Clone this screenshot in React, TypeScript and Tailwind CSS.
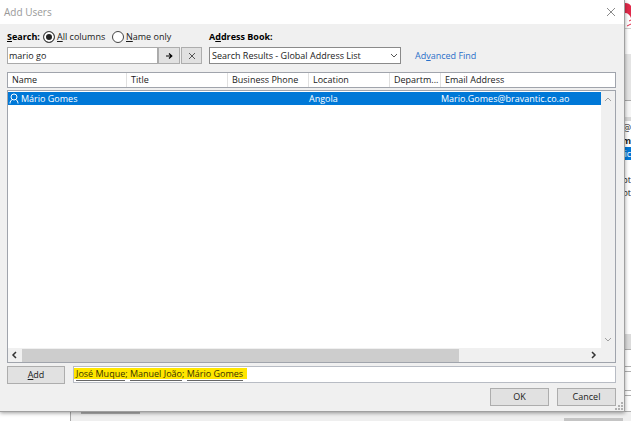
import React, { useState } from "react";

const columns = [
  { label: "Name", cell: "Mário Gomes" },
  { label: "Title", cell: "" },
  { label: "Business Phone", cell: "" },
  { label: "Location", cell: "Angola" },
  { label: "Departm...", cell: "" },
  { label: "Email Address", cell: "Mario.Gomes@bravantic.co.ao" },
];

const recipients = ["José Muque", "Manuel João", "Mário Gomes"];

function Chevron({ d, className }: { d: string; className: string }) {
  return (
    <svg viewBox="0 0 8 8" className={`w-2 h-2 fill-none ${className}`}>
      <path d={d} />
    </svg>
  );
}

function Columns() {
  return (
    <colgroup>
      <col className="w-[119px]" />
      <col className="w-[101px]" />
      <col className="w-[81px]" />
      <col className="w-[81px]" />
      <col className="w-[51px]" />
      <col />
    </colgroup>
  );
}

// Only its right edge shows, the dialog lies over the rest
function BackgroundWindow() {
  return (
    <div className="w-[6px] shrink-0 bg-white flex flex-col leading-[13px] whitespace-nowrap">
      <svg viewBox="0 0 6 28" className="w-[6px] h-[28px] shrink-0">
        <path d="M0 3C3 3 5 4 6 6V18C5 15 3 13 0 13Z" fill="#e0294a" />
        <path d="M2 26L6 24M4 21L6 20" stroke="#e0294a" fill="none" />
      </svg>
      <div className="h-[26px] shrink-0 border-t border-[#d0d0d0]" />
      <div className="h-[47px] shrink-0 bg-[#e4e4e4] border-b border-[#a8a8a8]" />
      <div className="h-[16px] shrink-0 bg-[#f6f6f6]" />
      <div className="h-[4px] shrink-0 bg-[#d8d8d8]" />
      <div className="flex justify-end">@</div>
      <div className="flex justify-end font-bold">m</div>
      <div className="flex justify-end bg-[#0078d7] text-white">ic</div>
      <div className="mt-[13px] flex justify-end">pt</div>
      <div className="flex justify-end">ot</div>
      <div className="flex-1" />
      <div className="h-[15px] bg-[#dcdcdc]" />
      <div className="h-[18px] border-y border-[#b0b0b0]" />
      <div className="h-[20px] mt-1 border-y border-[#b0b0b0]" />
      <div className="h-[17px] mt-1 border-y border-[#b0b0b0]" />
    </div>
  );
}

export default function App() {
  const [mode, setMode] = useState("all");
  const [query, setQuery] = useState("mario go");

  return (
    <div className="min-h-screen flex flex-col bg-[#efefef] text-[9px] leading-3 text-[#1a1a1a] font-['Open_Sans','Noto_Sans',sans-serif]">
      <div className="flex-1 flex">
        <div className="relative z-10 flex-1 min-w-0 flex flex-col bg-[#f0f0f0] border-r border-b border-[#a0a0a0] shadow-[0_1px_4px_rgba(0,0,0,0.4)]">
          {/* Title bar */}
          <div className="h-6 px-1 flex items-center justify-between bg-white">
            <h1 className="text-[10px] text-[#999999]">Add Users</h1>
            <button aria-label="Close" className="mr-1">
              <svg viewBox="0 0 10 10" className="w-[10px] h-[10px] fill-none stroke-[#8a8a8a]">
                <path d="M1 1L9 9M9 1L1 9" />
              </svg>
            </button>
          </div>

          <div className="flex-1 flex flex-col pl-[7px] pr-2 pt-[6px] pb-[5px]">
            {/* Search criteria */}
            <div className="flex items-end">
              <div className="w-[202px] shrink-0">
                <div className="h-[13px] flex items-center">
                  <label htmlFor="query" className="w-9 font-bold text-black"><u>S</u>earch:</label>
                  <label className="w-[69px] flex items-center gap-[2px]">
                    <input type="radio" name="mode" checked={mode === "all"} onChange={() => setMode("all")} className="appearance-none w-3 h-3 rounded-full border border-[#444444] bg-white checked:bg-[#222222] checked:shadow-[inset_0_0_0_2px_white]" />
                    <span><u>A</u>ll columns</span>
                  </label>
                  <label className="flex items-center gap-[2px]">
                    <input type="radio" name="mode" checked={mode === "name"} onChange={() => setMode("name")} className="appearance-none w-3 h-3 rounded-full border border-[#444444] bg-white checked:bg-[#222222] checked:shadow-[inset_0_0_0_2px_white]" />
                    <span><u>N</u>ame only</span>
                  </label>
                </div>
                <div className="mt-1 flex">
                  <input id="query" type="text" value={query} onChange={(e) => setQuery(e.target.value)} className="w-[151px] h-[17px] px-px bg-white border border-[#aaaaaa] outline-none" />
                  <button aria-label="Search" className="w-[22px] h-[17px] flex items-center justify-center bg-[#e1e1e1] border border-[#adadad]">
                    <svg viewBox="0 0 8 8" className="w-2 h-2 fill-none stroke-black">
                      <path d="M1 4H7M4 1.5L6.8 4L4 6.5" strokeWidth="1.2" />
                    </svg>
                  </button>
                  <button aria-label="Clear" onClick={() => setQuery("")} className="ml-px w-[21px] h-[17px] flex items-center justify-center bg-[#e1e1e1] border border-[#adadad]">
                    <svg viewBox="0 0 8 8" className="w-2 h-2 fill-none stroke-[#555555]">
                      <path d="M1 1L7 7M7 1L1 7" />
                    </svg>
                  </button>
                </div>
              </div>
              <div className="w-[192px] shrink-0">
                <label htmlFor="book" className="h-[13px] block leading-[14px] font-bold text-black">A<u>d</u>dress Book:</label>
                <div className="mt-1 grid items-center">
                  <select id="book" className="col-start-1 row-start-1 w-full h-[17px] px-[2px] appearance-none bg-white border border-[#8a8a8a] outline-none">
                    <option>Search Results - Global Address List</option>
                  </select>
                  <Chevron d="M1 2L4 5L7 2" className="col-start-1 row-start-1 justify-self-end mr-[3px] pointer-events-none stroke-[#555555]" />
                </div>
              </div>
              <a href="#" className="ml-[14px] mb-[2px] text-[#2a6fc9]">Ad<u>v</u>anced Find</a>
            </div>

            {/* Results */}
            <div className="mt-2 flex-1 flex flex-col">
              <div className="h-[16px] bg-white border border-[#a0a4ac]">
                <table className="w-full table-fixed border-separate border-spacing-0">
                  <Columns />
                  <thead>
                    <tr>
                      {columns.map((c) => (
                        <th key={c.label} className="h-[14px] p-0 pl-1 text-left font-normal whitespace-nowrap border-r border-[#e0e0e0] last:border-r-0">{c.label}</th>
                      ))}
                    </tr>
                  </thead>
                </table>
              </div>
              <div className="mt-[2px] flex-1 flex flex-col bg-white border border-[#a0a4ac]">
                <div className="flex-1 flex">
                  <div className="flex-1 pt-px">
                    <table className="w-full table-fixed">
                      <Columns />
                      <tbody>
                        <tr className="bg-[#0078d7] text-white">
                          {columns.map((c, i) => (
                            <td key={c.label} className="h-[13px] p-0 whitespace-nowrap">
                              <span className="flex items-center gap-[2px]">
                                {i === 0 && (
                                  <svg viewBox="0 0 10 11" className="ml-px w-[10px] h-[11px] fill-none stroke-white">
                                    <circle cx="5" cy="4" r="3" />
                                    <path d="M1 10.5C1 8.5 2 7 3.5 6.5M9 10.5C9 8.5 8 7 6.5 6.5" />
                                  </svg>
                                )}
                                {c.cell}
                              </span>
                            </td>
                          ))}
                        </tr>
                      </tbody>
                    </table>
                  </div>
                  <div className="w-[14px] py-1 flex flex-col items-center justify-between bg-[#f0f0f0]">
                    <Chevron d="M1 6L4 3L7 6" className="stroke-[#a0a0a0]" />
                    <Chevron d="M1 2L4 5L7 2" className="stroke-[#a0a0a0]" />
                  </div>
                </div>
                <div className="h-[14px] pl-[2px] pr-[18px] flex items-center bg-[#f0f0f0]">
                  <Chevron d="M6 1L3 4L6 7" className="stroke-[#333333] stroke-[1.5]" />
                  <div className="ml-1 flex-1">
                    <div className="w-[77%] h-[13px] bg-[#cdcdcd]" />
                  </div>
                  <Chevron d="M3 1L6 4L3 7" className="stroke-[#333333] stroke-[1.5]" />
                </div>
              </div>
            </div>

            {/* Selected users */}
            <div className="mt-[3px] flex gap-2">
              <button className="w-[58px] h-[18px] bg-[#e1e1e1] border border-[#adadad]"><u>A</u>dd</button>
              <div className="flex-1 h-[17px] flex items-start bg-white border border-[#b8bcc4]">
                <div className="h-[11px] pl-[2px] pr-1 mt-px bg-[#ffe600] leading-[11px] text-[#3a3300]">
                  {recipients.map((name, i) => (
                    <span key={name}>
                      <span className="border-b border-[#666666]">{name}</span>
                      {i < recipients.length - 1 && "; "}
                    </span>
                  ))}
                </div>
              </div>
            </div>
            <div className="mt-1 flex justify-end gap-2">
              <button className="w-[59px] h-[18px] bg-[#e1e1e1] border border-[#adadad]">OK</button>
              <button className="w-[59px] h-[18px] bg-[#e1e1e1] border border-[#adadad]">Cancel</button>
            </div>
          </div>
          <svg viewBox="0 0 8 8" className="absolute right-px bottom-px w-2 h-2 fill-[#b0b0b0]">
            <path d="M6 0h2v2h-2zM3 3h2v2h-2zM6 3h2v2h-2zM0 6h2v2h-2zM3 6h2v2h-2zM6 6h2v2h-2z" />
          </svg>
        </div>
        <BackgroundWindow />
      </div>

      {/* Lower edge of the window behind the dialog */}
      <div className="h-[9px] flex items-start">
        <div className="w-[71px] h-full bg-white border-r border-[#a8a8a8]" />
        <div className="ml-[10px] w-[59px] h-[2px] bg-[#b0b0b0]" />
        <div className="flex-1" />
        <div className="mr-2 mt-[6px] w-[59px] h-[3px] bg-[#c4c4c4]" />
      </div>
    </div>
  );
}
